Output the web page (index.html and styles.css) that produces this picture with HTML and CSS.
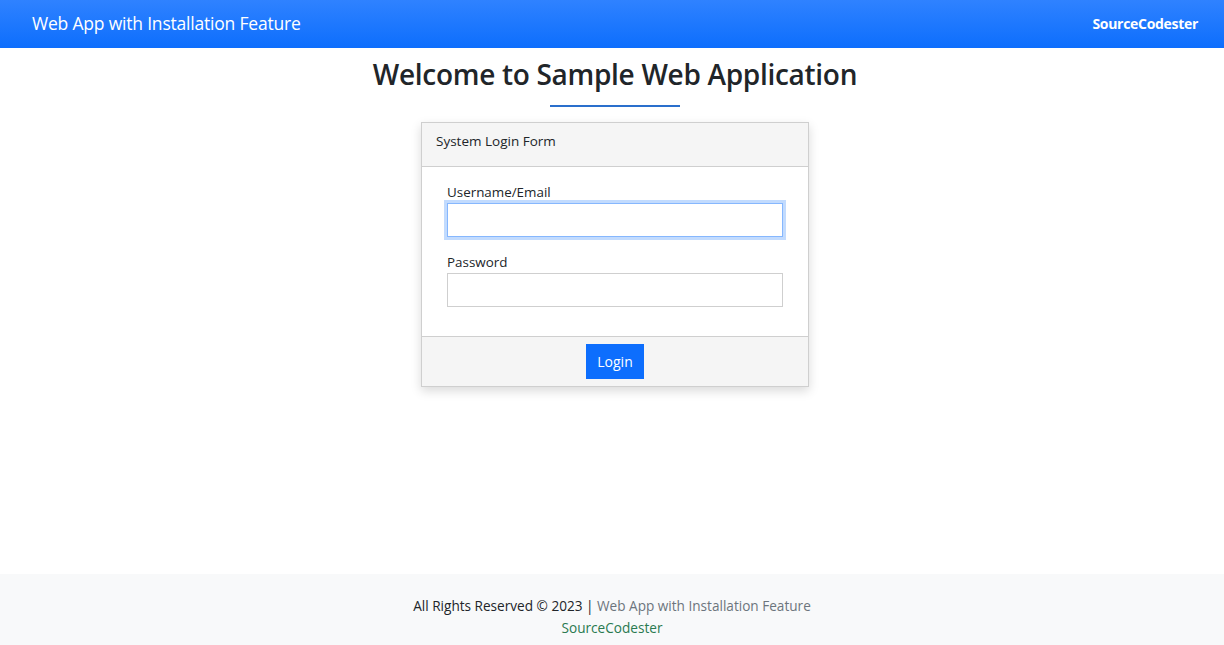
FILE: index.html
```html
<!DOCTYPE html>
<html lang="en">
<head>
<meta charset="utf-8">
<title>Web App with Installation Feature</title>
<link rel="stylesheet" href="styles.css">
</head>
<body>
<div class="page">
  <nav class="topbar">
    <span class="brand">Web App with Installation Feature</span>
    <span class="site">SourceCodester</span>
  </nav>
  <main class="main">
    <h2 class="title">Welcome to Sample Web Application</h2>
    <div class="rule"></div>
    <div class="card">
      <div class="card-header">System Login Form</div>
      <div class="card-body">
        <div class="field">
          <label class="label" for="username">Username/Email</label>
          <input class="input focused" id="username" type="text">
        </div>
        <div class="field">
          <label class="label" for="password">Password</label>
          <input class="input" id="password" type="password">
        </div>
      </div>
      <div class="card-footer">
        <button class="btn" type="button">Login</button>
      </div>
    </div>
  </main>
  <footer class="footer">
    <div>All Rights Reserved © 2023 | <span class="muted">Web App with Installation Feature</span></div>
    <div class="green">SourceCodester</div>
  </footer>
</div>
</body>
</html>
```
FILE: styles.css
```css
* { box-sizing: border-box; }
html, body { margin: 0; padding: 0; }
body {
  font-family: "Open Sans", "Noto Sans", sans-serif;
  color: #212529;
  background: #fff;
}
.page {
  min-height: 645px;
  display: flex;
  flex-direction: column;
}
.topbar {
  height: 48px;
  background: linear-gradient(180deg, #2f82ff 0%, #0d6efd 100%);
  display: flex;
  align-items: center;
  justify-content: space-between;
  padding: 0 26px 2px 32px;
}
.brand {
  color: #fff;
  font-size: 17.5px;
  letter-spacing: -0.2px;
}
.site {
  color: #fff;
  font-size: 14px;
  font-weight: 700;
  letter-spacing: -0.3px;
}
.main {
  flex: 1;
  display: flex;
  flex-direction: column;
  align-items: center;
  padding-left: 6px;
}
.title {
  margin: 9px 0 0;
  font-size: 28px;
  font-weight: 600;
  line-height: 35px;
  letter-spacing: -0.3px;
}
.rule {
  width: 130px;
  height: 2px;
  background: #2a6fcc;
  margin-top: 13px;
}
.card {
  margin-top: 15px;
  width: 388px;
  border: 1px solid #cfcfcf;
  background: #fff;
  box-shadow: 0 4px 10px rgba(0,0,0,0.15);
}
.card-header {
  height: 44px;
  background: #f5f5f5;
  border-bottom: 1px solid #cfcfcf;
  padding: 8px 14px 0;
  font-size: 13.5px;
  line-height: 20px;
  color: #212529;
}
.card-body {
  padding: 16px 25px 29px;
  display: flex;
  flex-direction: column;
  gap: 16px;
}
.field {
  display: flex;
  flex-direction: column;
}
.label {
  font-size: 13.4px;
  line-height: 18px;
  margin-bottom: 2px;
}
.input {
  height: 34px;
  width: 100%;
  border: 1px solid #cfcfcf;
  outline: none;
  font-family: inherit;
  font-size: 14px;
  padding: 4px 8px;
  background: #fff;
}
.input.focused {
  border-color: #86b7fe;
  box-shadow: 0 0 0 3px #c2dbfe;
}
.card-footer {
  height: 50px;
  background: #f5f5f5;
  border-top: 1px solid #cfcfcf;
  display: flex;
  justify-content: center;
  align-items: center;
}
.btn {
  background: #0d6efd;
  color: #fff;
  border: none;
  border-radius: 0;
  font-family: inherit;
  font-size: 14px;
  width: 58px;
  height: 35px;
  padding: 0;
}
.footer {
  background: #f8f9fa;
  height: 71px;
  display: flex;
  flex-direction: column;
  align-items: center;
  justify-content: flex-start;
  padding-top: 21px;
  font-size: 13.6px;
  line-height: 22px;
}
.muted { color: #6c757d; }
.green { color: #2a7a50; }
```
